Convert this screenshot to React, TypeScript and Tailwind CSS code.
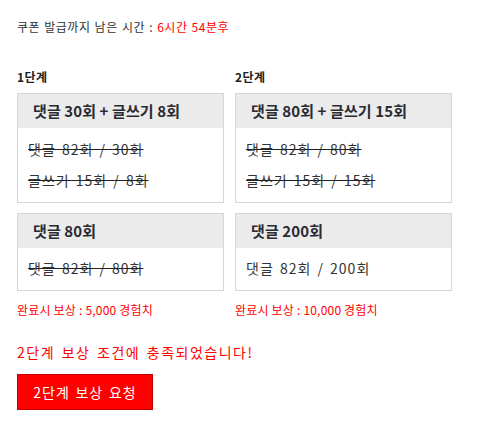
import React from 'react';

interface Stage {
  label: string;
  width: string;
  missions: { title: string; rows: { text: string; done: boolean }[] }[];
  reward: string;
}

const stages: Stage[] = [
  {
    label: '1단계',
    width: 'w-[207px]',
    missions: [
      {
        title: '댓글 30회 + 글쓰기 8회',
        rows: [
          { text: '댓글 82회 / 30회', done: true },
          { text: '글쓰기 15회 / 8회', done: true },
        ],
      },
      { title: '댓글 80회', rows: [{ text: '댓글 82회 / 80회', done: true }] },
    ],
    reward: '완료시 보상 : 5,000 경험치',
  },
  {
    label: '2단계',
    width: 'w-[217px]',
    missions: [
      {
        title: '댓글 80회 + 글쓰기 15회',
        rows: [
          { text: '댓글 82회 / 80회', done: true },
          { text: '글쓰기 15회 / 15회', done: true },
        ],
      },
      { title: '댓글 200회', rows: [{ text: '댓글 82회 / 200회', done: false }] },
    ],
    reward: '완료시 보상 : 10,000 경험치',
  },
];

export default function App() {
  return (
    <div
      className="min-h-screen bg-white pl-[17px] pt-[19px] text-[#333]"
      style={{ fontFamily: '"Noto Sans CJK KR", "Noto Sans", sans-serif' }}
    >
      {/* Countdown */}
      <p className="text-[12px] leading-[16px] tracking-[0.5px] [word-spacing:1px]">
        쿠폰 발급까지 남은 시간 : <span className="text-[#ff0000]">6시간 54분후</span>
      </p>

      {/* Stages */}
      <div className="mt-[34px] flex gap-[11px]">
        {stages.map((stage) => (
          <div key={stage.label} className={`flex flex-col ${stage.width}`}>
            <div className="text-[12px] font-bold leading-[16px] tracking-[0.5px] text-[#222]">{stage.label}</div>

            {stage.missions.map((m, i) => (
              <div key={i} className={`border border-[#d6d6d6] ${i === 0 ? 'mt-[8px]' : 'mt-[10px]'}`}>
                <div className="flex h-[34px] items-center bg-[#ebebeb] pl-[15px] text-[15px] font-bold tracking-[0.1px] text-[#2a2a33]">
                  {m.title}
                </div>
                <div className={`pl-[10px] ${m.rows.length > 1 ? 'pt-[6px] pb-[6px]' : 'pt-[5px] pb-[6px]'}`}>
                  {m.rows.map((r) => (
                    <div
                      key={r.text}
                      className={`text-[14px] leading-[31px] tracking-[1px] [word-spacing:2px] ${r.done ? 'line-through decoration-[#222]' : ''}`}
                    >
                      {r.text}
                    </div>
                  ))}
                </div>
              </div>
            ))}

            <div className="mt-[11px] text-[12px] leading-[16px] tracking-[0.2px] text-[#ff0000]">{stage.reward}</div>
          </div>
        ))}
      </div>

      {/* Status */}
      <p className="mt-[25px] text-[14px] leading-[18px] tracking-[1.5px] [word-spacing:2px] text-[#ff0000]">
        2단계 보상 조건에 충족되었습니다!
      </p>

      <button className="mt-[13px] flex h-[36px] w-[136px] items-center justify-center border border-[#c00000] bg-[#ff0000] text-[14px] tracking-[1px] [word-spacing:1.5px] text-white">
        2단계 보상 요청
      </button>
    </div>
  );
}
